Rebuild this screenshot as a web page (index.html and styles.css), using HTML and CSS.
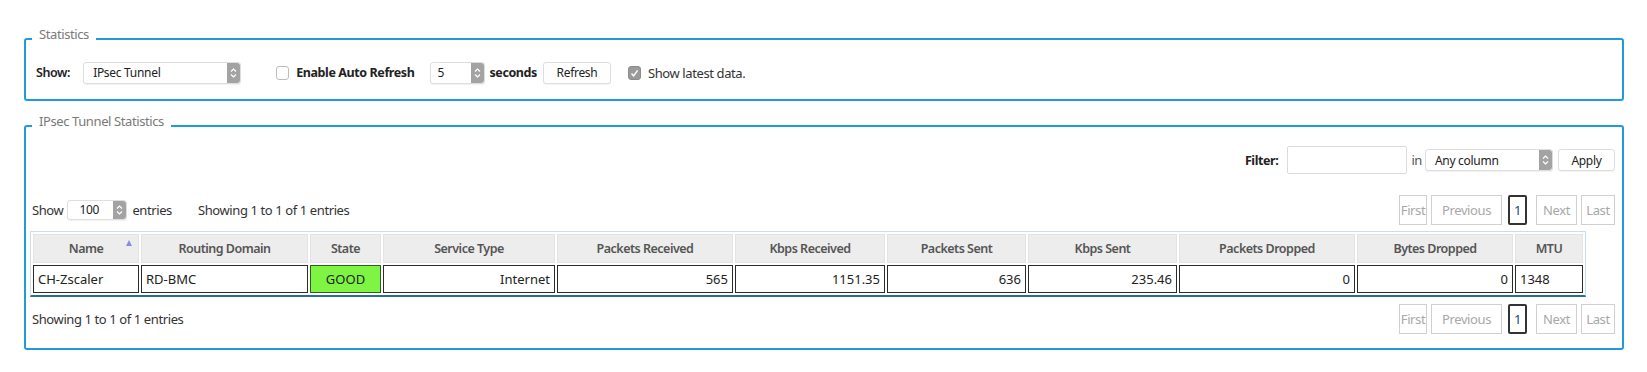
FILE: index.html
```html
<!DOCTYPE html>
<html>
<head>
<meta charset="utf-8">
<title>Statistics</title>
<link rel="stylesheet" href="styles.css">
</head>
<body>
<fieldset class="box box-stats">
  <legend>Statistics</legend>
  <div class="controls">
    <span class="strong lbl-show">Show:</span>
    <div class="select sel-type"><span class="sel-text">IPsec Tunnel</span><span class="spin"><svg width="13" height="22" viewBox="0 0 13 22"><path d="M4 9.5 L6.5 7 L9 9.5 M4 12.5 L6.5 15 L9 12.5" fill="none" stroke="#fff" stroke-width="1.2"/></svg></span></div>
    <label class="check chk-auto"><span class="cb"></span><span class="strong">Enable Auto Refresh</span></label>
    <div class="select sel-sec"><span class="sel-text">5</span><span class="spin"><svg width="13" height="22" viewBox="0 0 13 22"><path d="M4 9.5 L6.5 7 L9 9.5 M4 12.5 L6.5 15 L9 12.5" fill="none" stroke="#fff" stroke-width="1.2"/></svg></span></div>
    <span class="strong lbl-sec">seconds</span>
    <button class="btn btn-refresh">Refresh</button>
    <label class="check chk-latest"><span class="cb on"><svg width="13" height="14" viewBox="0 0 13 14"><path d="M3.5 7.5 L5.6 9.8 L9.6 4.4" fill="none" stroke="#fff" stroke-width="1.4"/></svg></span><span>Show latest data.</span></label>
  </div>
</fieldset>

<fieldset class="box box-ipsec">
  <legend>IPsec Tunnel Statistics</legend>
  <div class="filter-row">
    <span class="strong">Filter:</span>
    <span class="input"></span>
    <span class="in">in</span>
    <div class="select sel-col"><span class="sel-text">Any column</span><span class="spin"><svg width="13" height="22" viewBox="0 0 13 22"><path d="M4 9.5 L6.5 7 L9 9.5 M4 12.5 L6.5 15 L9 12.5" fill="none" stroke="#fff" stroke-width="1.2"/></svg></span></div>
    <button class="btn btn-apply">Apply</button>
  </div>
  <div class="list-row">
    <div class="length">
      <span>Show</span>
      <div class="select sel-len"><span class="sel-text">100</span><span class="spin"><svg width="13" height="20" viewBox="0 0 13 20"><path d="M4 8.5 L6.5 6 L9 8.5 M4 11.5 L6.5 14 L9 11.5" fill="none" stroke="#fff" stroke-width="1.2"/></svg></span></div>
      <span>entries</span>
      <span class="info">Showing 1 to 1 of 1 entries</span>
    </div>
    <div class="pager">
      <span class="pg pg-first">First</span>
      <span class="pg pg-prev">Previous</span>
      <span class="pg pg-cur">1</span>
      <span class="pg pg-next">Next</span>
      <span class="pg pg-last">Last</span>
    </div>
  </div>
  <div class="table-wrap">
    <table class="grid">
      <colgroup>
        <col class="c-name"><col class="c-rd"><col class="c-state"><col class="c-svc"><col class="c-prx"><col class="c-krx"><col class="c-ptx"><col class="c-ktx"><col class="c-pdr"><col class="c-bdr"><col class="c-mtu">
      </colgroup>
      <thead>
        <tr>
          <th class="sorted">Name<span class="arrow"></span></th>
          <th>Routing Domain</th>
          <th>State</th>
          <th>Service Type</th>
          <th>Packets Received</th>
          <th>Kbps Received</th>
          <th>Packets Sent</th>
          <th>Kbps Sent</th>
          <th>Packets Dropped</th>
          <th>Bytes Dropped</th>
          <th>MTU</th>
        </tr>
      </thead>
      <tbody>
        <tr>
          <td>CH-Zscaler</td>
          <td>RD-BMC</td>
          <td class="good">GOOD</td>
          <td class="num">Internet</td>
          <td class="num">565</td>
          <td class="num">1151.35</td>
          <td class="num">636</td>
          <td class="num">235.46</td>
          <td class="num">0</td>
          <td class="num">0</td>
          <td>1348</td>
        </tr>
      </tbody>
    </table>
  </div>
  <div class="list-row foot-row">
    <span class="info-foot">Showing 1 to 1 of 1 entries</span>
    <div class="pager">
      <span class="pg pg-first">First</span>
      <span class="pg pg-prev">Previous</span>
      <span class="pg pg-cur">1</span>
      <span class="pg pg-next">Next</span>
      <span class="pg pg-last">Last</span>
    </div>
  </div>
</fieldset>
</body>
</html>
```

FILE: styles.css
```css
html, body {
  margin: 0;
  padding: 0;
  background: #fff;
}
body {
  font-family: "Noto Sans", "Open Sans", sans-serif;
  font-size: 13px;
  letter-spacing: -0.4px;
  color: #333;
}
.strong { font-weight: 700; color: #222; font-size: 12.5px; letter-spacing: -0.4px; }

.box {
  margin: 0 23px 0 24px;
  border: 2px solid #1f9bdc;
  border-radius: 3px;
  padding: 0 7px 0 6px;
  min-width: 0;
}
.box legend {
  margin-left: 0;
  padding: 0 7px 10px 7px;
  line-height: 14px;
  color: #7a7a7a;
  font-size: 13px;
}
.box-stats {
  margin-top: 27px;
  padding-top: 10px;
  padding-bottom: 15px;
}
.box-ipsec {
  margin-top: 13px;
  padding-top: 8px;
  padding-bottom: 14px;
}

/* top controls */
.controls {
  display: flex;
  align-items: center;
  height: 23px;
  padding-left: 4px;
}
.lbl-show { margin-right: 13px; font-weight: 600; }
.select {
  display: flex;
  align-items: center;
  height: 22px;
  box-sizing: border-box;
  border: 1px solid #dedede;
  border-radius: 3px;
  background: #fff;
  color: #222;
  font-size: 12px;
  letter-spacing: -0.3px;
  box-shadow: 0 1px 1px rgba(0,0,0,0.06);
}
.sel-text { flex: 1; padding-left: 9px; white-space: nowrap; }
.spin {
  width: 13px;
  height: 100%;
  background: #a3a3a3;
  border-radius: 0 3px 3px 0;
  display: flex;
  align-items: center;
}
.spin svg { display: block; }
.sel-type { width: 158px; }
.sel-sec { width: 55px; margin-left: 16px; margin-right: 4px; }
.sel-sec .sel-text { padding-left: 6px; }
.check { display: flex; align-items: center; }
.cb {
  width: 13px;
  height: 14px;
  box-sizing: border-box;
  border: 1px solid #bdbdbd;
  border-radius: 3px;
  background: #fff;
  margin-right: 7px;
}
.cb.on { background: #9a9a9a; border-color: #8c8c8c; }
.cb.on svg { display: block; margin: -1px; }
.chk-auto { margin-left: 35px; }
.chk-latest { margin-left: 17px; color: #333; }
.lbl-sec { margin-right: 6px; }
.btn {
  font-family: inherit;
  font-size: 12px;
  letter-spacing: -0.3px;
  color: #222;
  background: #fff;
  border: 1px solid #dedede;
  border-radius: 3px;
  height: 22px;
  padding: 0;
  box-shadow: 0 1px 1px rgba(0,0,0,0.05);
}
.btn-refresh { width: 68px; }

/* filter */
.filter-row {
  display: flex;
  justify-content: flex-end;
  align-items: center;
  height: 28px;
}
.input {
  width: 120px;
  height: 28px;
  box-sizing: border-box;
  border: 1px solid #dcdcdc;
  border-radius: 2px;
  margin-left: 9px;
}
.in { margin: 0 3px 0 4px; color: #555; }
.sel-col { width: 128px; }
.btn-apply { width: 57px; margin-left: 5px; }

/* length + pager */
.list-row {
  display: flex;
  justify-content: space-between;
  align-items: center;
  margin-top: 20px;
  height: 31px;
}
.length { display: flex; align-items: center; }
.sel-len { width: 60px; height: 20px; margin: 0 5px 0 4px; }
.sel-len .sel-text { padding-left: 11px; }
.info { margin-left: 26px; }
.pager { display: flex; align-items: center; }
.pg {
  height: 30px;
  box-sizing: border-box;
  border: 1px solid #d0d0d0;
  color: #a8a8a8;
  display: flex;
  align-items: center;
  justify-content: center;
  margin-left: 4px;
}
.pg-first { width: 28px; }
.pg-prev { width: 71px; }
.pg-cur {
  width: 19px;
  border: 2px solid #333;
  border-radius: 2px;
  color: #1f3f8f;
  margin-left: 6px;
}
.pg-next { width: 41px; margin-left: 9px; }
.pg-last { width: 34px; }

/* table */
.table-wrap {
  margin-top: 6px;
  display: block;
  width: max-content;
  border: 1px solid #c2e0f0;
  border-bottom: 2px solid #2e6b90;
  margin-left: -2px;
}
.grid {
  table-layout: fixed;
  width: 1554px;
  border-collapse: separate;
  border-spacing: 2px;
}
.c-name { width: 106px; }
.c-rd { width: 167px; }
.c-state { width: 71px; }
.c-svc { width: 172px; }
.c-prx { width: 176px; }
.c-krx { width: 150px; }
.c-ptx { width: 139px; }
.c-ktx { width: 149px; }
.c-pdr { width: 176px; }
.c-bdr { width: 156px; }
.c-mtu { width: 68px; }
.grid th {
  height: 29px;
  box-sizing: border-box;
  background: #ededed;
  border: 1px solid #e4e4e4;
  color: #555;
  font-weight: 600;
  font-size: 12.5px;
  letter-spacing: -0.5px;
  text-align: center;
  padding: 0 4px;
  white-space: nowrap;
}
.grid th.sorted { position: relative; }
.arrow {
  position: absolute;
  right: 6px;
  top: 5px;
  width: 0;
  height: 0;
  border-left: 3.5px solid transparent;
  border-right: 3.5px solid transparent;
  border-bottom: 6px solid #8a8ae6;
}
.grid td {
  height: 28px;
  box-sizing: border-box;
  border: 1px solid #2b2b2b;
  padding: 0 4px;
  color: #222;
  font-size: 13px;
  letter-spacing: 0;
  white-space: nowrap;
}
.grid td.num { text-align: right; }
.grid td.good { background: #7ef542; text-align: center; border-color: #2f5e22; }

.foot-row { margin-top: 7px; height: 30px; }
```
